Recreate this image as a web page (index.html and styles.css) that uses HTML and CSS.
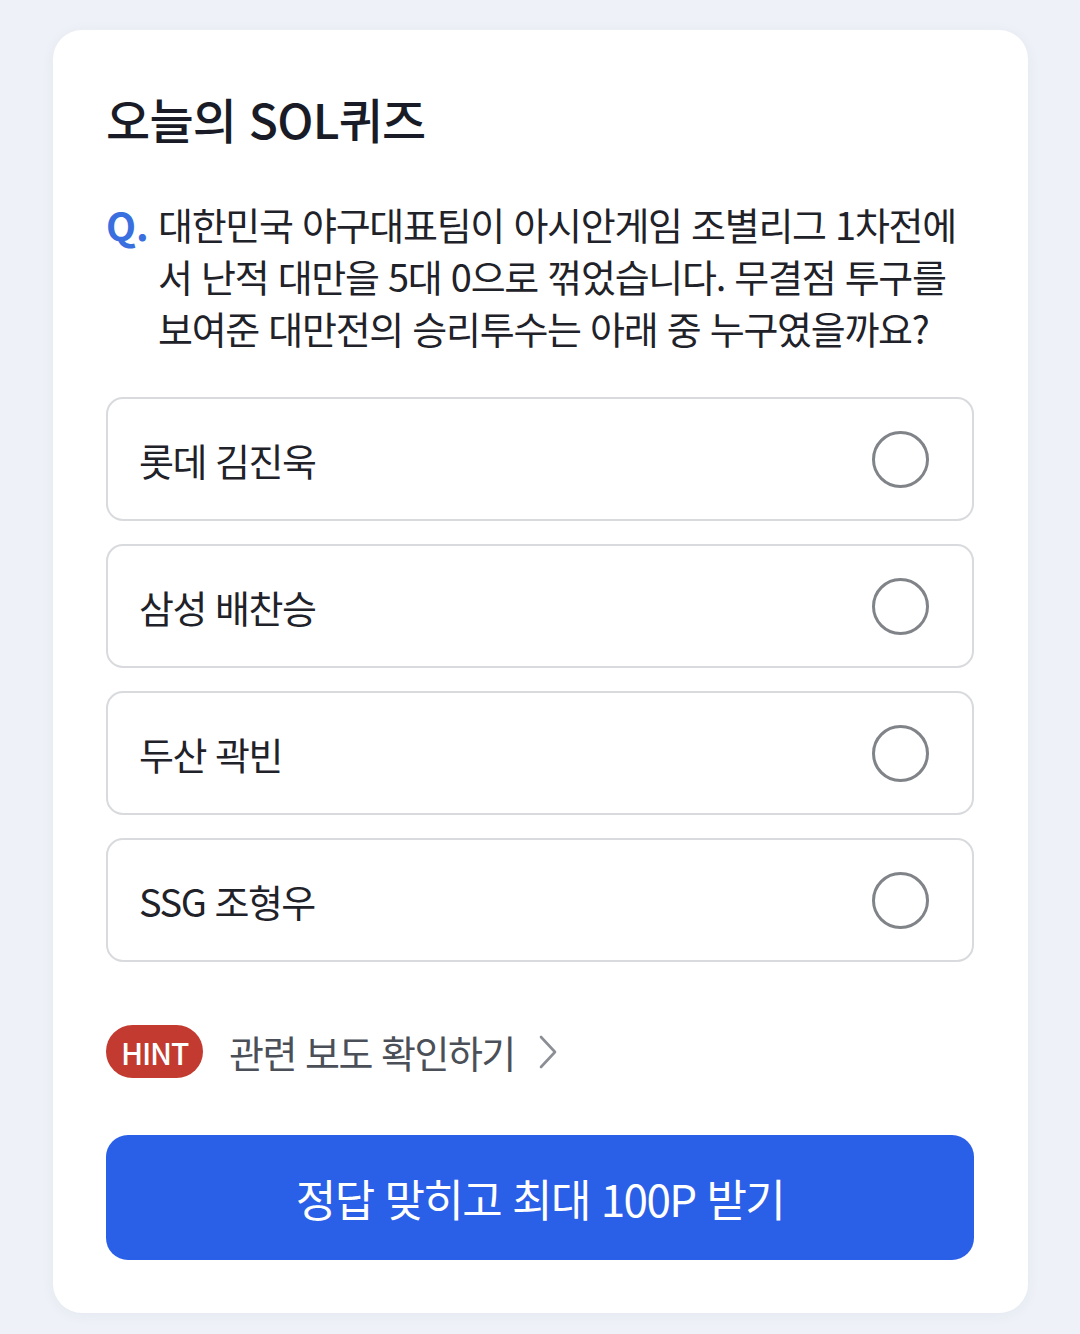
FILE: index.html
```html
<!DOCTYPE html>
<html lang="ko">

<head>
    <meta charset="UTF-8">
    <meta name="viewport" content="width=device-width, initial-scale=1.0">
    <title>오늘의 SOL퀴즈</title>
    <link rel="stylesheet" href="styles.css">
</head>

<body>

    <div class="page">
        <div class="card">
            <h2 class="title">오늘의 SOL퀴즈</h2>

            <div class="question">
                <span class="q-mark">Q.</span>
                <p class="q-text">대한민국 야구대표팀이 아시안게임 조별리그 1차전에<br>서 난적 대만을 5대 0으로 꺾었습니다. 무결점 투구를<br>보여준 대만전의 승리투수는 아래 중 누구였을까요?</p>
            </div>

            <div class="options">
                <label class="option">
                    <span class="option-text">롯데 김진욱</span>
                    <span class="radio"></span>
                </label>
                <label class="option">
                    <span class="option-text">삼성 배찬승</span>
                    <span class="radio"></span>
                </label>
                <label class="option">
                    <span class="option-text">두산 곽빈</span>
                    <span class="radio"></span>
                </label>
                <label class="option">
                    <span class="option-text">SSG 조형우</span>
                    <span class="radio"></span>
                </label>
            </div>

            <a class="hint" href="#">
                <span class="hint-badge">HINT</span>
                <span class="hint-text">관련 보도 확인하기</span>
                <svg class="chevron" width="18" height="34" viewBox="0 0 18 34">
                    <path d="M2 2 L16 17 L2 32" fill="none" stroke="#8b8f95" stroke-width="2.6" stroke-linecap="round" stroke-linejoin="round" />
                </svg>
            </a>

            <button class="submit">정답 맞히고 최대 100P 받기</button>
        </div>
    </div>

</body>

</html>
```

FILE: styles.css
```css
* {
    margin: 0;
    padding: 0;
    box-sizing: border-box;
}

body {
    font-family: "Noto Sans CJK KR", "Noto Sans", sans-serif;
    background-color: #eef1f7;
    width: 1080px;
    height: 1334px;
    overflow: hidden;
}

.page {
    padding: 30px 52px 0 53px;
    border-top: 5px solid #e9ebf0;
    margin-top: -5px;
}

.card {
    background-color: #fff;
    border-radius: 29px;
    box-shadow: 0 2px 14px rgba(40, 60, 110, 0.05);
    padding: 53px 54px 53px 53px;
    display: flex;
    flex-direction: column;
}

.title {
    font-size: 48px;
    font-weight: 500;
    line-height: 70px;
    letter-spacing: -0.016em;
    color: #191c26;
}

.question {
    display: flex;
    margin-top: 45px;
}

.q-mark {
    width: 52px;
    flex-shrink: 0;
    font-size: 39px;
    font-weight: 700;
    line-height: 52px;
    color: #3a6fe0;
}

.q-text {
    font-size: 38px;
    line-height: 52px;
    letter-spacing: -0.034em;
    color: #1f2229;
    white-space: nowrap;
}

.options {
    display: flex;
    flex-direction: column;
    gap: 23px;
    margin-top: 43px;
}

.option {
    height: 124px;
    border: 2px solid #d9dadd;
    border-radius: 17px;
    display: flex;
    align-items: center;
    justify-content: space-between;
    padding: 0 43px 0 31px;
}

.option-text {
    font-size: 38px;
    letter-spacing: -0.04em;
    color: #1f2229;
}

.radio {
    width: 57px;
    height: 57px;
    border: 3px solid #808388;
    border-radius: 50%;
}

.hint {
    display: flex;
    align-items: center;
    margin-top: 62px;
    text-decoration: none;
}

.hint-badge {
    width: 97px;
    height: 53px;
    border-radius: 27px;
    background-color: #c23a30;
    color: #fff;
    font-size: 30px;
    font-weight: 500;
    letter-spacing: -0.04em;
    display: flex;
    align-items: center;
    justify-content: center;
}

.hint-text {
    margin-left: 26px;
    font-size: 38px;
    letter-spacing: -0.04em;
    color: #4b5058;
}

.chevron {
    margin-left: 24px;
}

.submit {
    margin-top: 56px;
    height: 125px;
    border: none;
    border-radius: 22px;
    background-color: #2a5fe8;
    color: #fff;
    font-family: inherit;
    font-size: 44px;
    letter-spacing: -0.035em;
    cursor: pointer;
}
```
